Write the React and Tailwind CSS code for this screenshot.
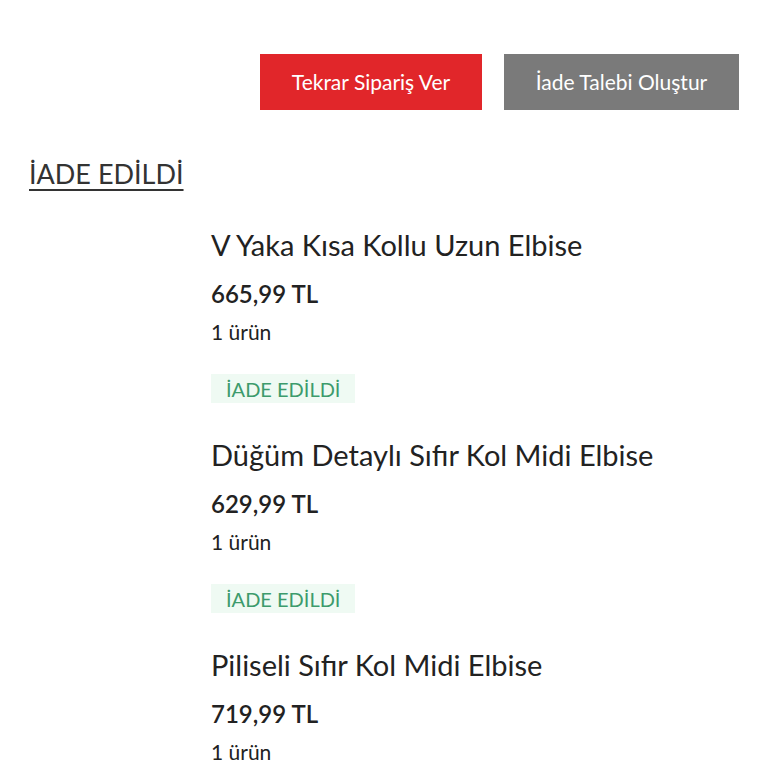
import React from "react";

const items = [
  { id: 1, name: "V Yaka Kısa Kollu Uzun Elbise", price: "665,99 TL", count: "1 ürün", status: "İADE EDİLDİ" },
  { id: 2, name: "Düğüm Detaylı Sıfır Kol Midi Elbise", price: "629,99 TL", count: "1 ürün", status: "İADE EDİLDİ" },
  { id: 3, name: "Piliseli Sıfır Kol Midi Elbise", price: "719,99 TL", count: "1 ürün", status: "İADE EDİLDİ" },
];

export default function App() {
  return (
    <div className="h-[768px] overflow-hidden bg-white px-[29px] font-['Lato','Noto_Sans',sans-serif] text-[#222]">
      <div className="-mt-[24px] h-[26px] text-[26px] leading-[26px] text-[#333]">10 Kasım 2023</div>

      <div className="mt-[52px] flex justify-end gap-[22px]">
        <button type="button" className="h-[56px] w-[222px] bg-[#e1262a] text-[21px] text-white">
          Tekrar Sipariş Ver
        </button>
        <button type="button" className="h-[56px] w-[235px] bg-[#7a7a7a] text-[21px] text-white">
          İade Talebi Oluştur
        </button>
      </div>

      <h2 className="mt-[47px] text-[27px] leading-[34px] text-[#333] underline underline-offset-[5px] decoration-[1.5px]">
        İADE EDİLDİ
      </h2>

      <div className="mt-[37px] pl-[182px]">
        {items.map((item) => (
          <div key={item.id} className="h-[210px]">
            <div className="text-[29px] leading-[34px] text-[#222]">{item.name}</div>
            <div className="mt-[17px] text-[24px] font-semibold leading-[30px] text-[#222]">{item.price}</div>
            <div className="mt-[10px] text-[21px] leading-[26px] text-[#222]">{item.count}</div>
            <div className="mt-[29px] inline-flex h-[29px] items-center bg-[#effaf3] px-[15px] text-[20px] text-[#3d9b6c]">
              {item.status}
            </div>
          </div>
        ))}
      </div>
    </div>
  );
}
